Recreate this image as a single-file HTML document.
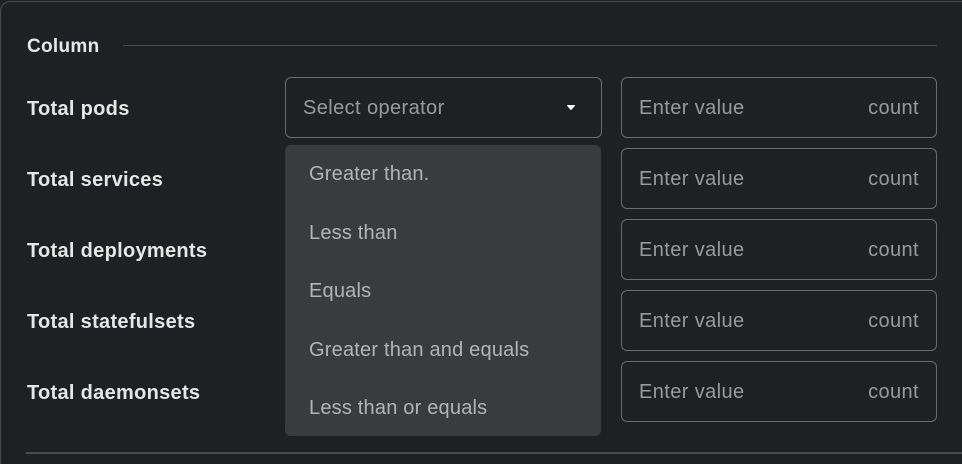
<!DOCTYPE html>
<html style="overflow:hidden;height:464px"><head><style>
body{margin:0;width:962px;height:464px;background:#1f2023;overflow:hidden;position:relative;font-family:"Liberation Sans",sans-serif;}
.frame{position:absolute;left:0;top:1px;width:980px;height:480px;border:1.5px solid #4a4b4e;border-radius:10px;box-sizing:border-box;}
.t{position:absolute;color:#e6e6e6;font-weight:bold;font-size:20px;letter-spacing:0.3px;line-height:22px;}
.line{position:absolute;height:1px;background:#4a4b4f;}
.box{position:absolute;border:1.5px solid #6a6b6e;border-radius:6px;box-sizing:border-box;height:61px;}
.ph{position:absolute;color:#9a9a9c;font-size:20px;letter-spacing:0.4px;top:19px;}
.dd{position:absolute;left:285px;top:145px;width:316px;height:291px;background:#3a3b3f;border-radius:6px;}
.op{position:absolute;left:24px;color:#b4b4b6;font-size:20px;letter-spacing:0.2px;}
</style></head><body>
<div class="frame"></div>
<div class="t" style="left:27px;top:36px;font-size:19px">Column</div>
<div class="line" style="left:123px;top:45px;width:814px"></div>
<div class="t" style="left:27px;top:98px">Total pods</div>
<div class="t" style="left:27px;top:169px">Total services</div>
<div class="t" style="left:27px;top:240px">Total deployments</div>
<div class="t" style="left:27px;top:311px">Total statefulsets</div>
<div class="t" style="left:27px;top:382px">Total daemonsets</div>
<div class="box" style="left:285px;top:77px;width:317px"><span class="ph" style="left:17px">Select operator</span>
<svg style="position:absolute;left:280px;top:26px" width="10" height="7"><path d="M1.5 1.5 L8.5 1.5 L5 5.5 Z" fill="#fff" stroke="#fff" stroke-linejoin="round"/></svg></div>
<div class="box" style="left:621px;top:77px;width:316px"><span class="ph" style="left:17px">Enter value</span><span class="ph" style="right:17px">count</span></div>
<div class="box" style="left:621px;top:148px;width:316px"><span class="ph" style="left:17px">Enter value</span><span class="ph" style="right:17px">count</span></div>
<div class="box" style="left:621px;top:219px;width:316px"><span class="ph" style="left:17px">Enter value</span><span class="ph" style="right:17px">count</span></div>
<div class="box" style="left:621px;top:290px;width:316px"><span class="ph" style="left:17px">Enter value</span><span class="ph" style="right:17px">count</span></div>
<div class="box" style="left:621px;top:361px;width:316px"><span class="ph" style="left:17px">Enter value</span><span class="ph" style="right:17px">count</span></div>
<div class="dd">
<div class="op" style="top:18px">Greater than.</div>
<div class="op" style="top:77px">Less than</div>
<div class="op" style="top:135px">Equals</div>
<div class="op" style="top:194px">Greater than and equals</div>
<div class="op" style="top:252px">Less than or equals</div>
</div>
<div class="line" style="left:26px;top:452px;width:940px;height:1.5px"></div>
</body></html>
